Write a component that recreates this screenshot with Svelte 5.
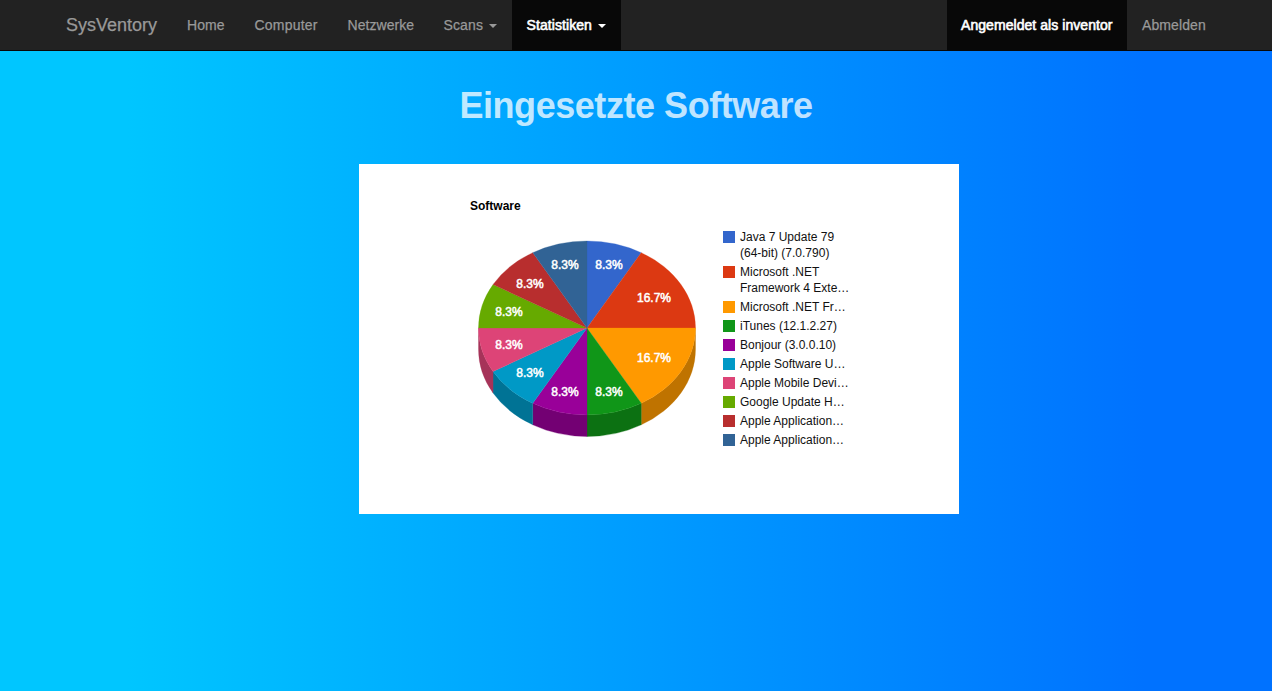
<script>
  const left = [
    { label: 'Home', w: 68, ls: 0.05, pad: 15 },
    { label: 'Computer', w: 93, ls: 0.2, pad: 14.5 },
    { label: 'Netzwerke', w: 96, ls: 0.05, pad: 14.5 },
    { label: 'Scans', w: 83, ls: 0.12, pad: 14.5, caret: true },
    { label: 'Statistiken', w: 109, ls: 0.08, pad: 14.5, caret: true, active: true }
  ];
  const right = [
    { label: 'Angemeldet als inventor', w: 180, ls: 0.06, pad: 14, active: true },
    { label: 'Abmelden', w: 94, ls: 0.1, pad: 15 }
  ];

  const slices = [
    { color: '#3366cc', side: '#264d99', share: 1, x: 250, y: 105, lines: ['Java 7 Update 79', '(64-bit) (7.0.790)'] },
    { color: '#dc3912', side: '#a52b0e', share: 2, x: 295, y: 138, lines: ['Microsoft .NET', 'Framework 4 Exte…'] },
    { color: '#ff9900', side: '#bf7300', share: 2, x: 295, y: 198, lines: ['Microsoft .NET Fr…'] },
    { color: '#109618', side: '#0c7112', share: 1, x: 250, y: 232, lines: ['iTunes (12.1.2.27)'] },
    { color: '#990099', side: '#730073', share: 1, x: 206, y: 232, lines: ['Bonjour (3.0.0.10)'] },
    { color: '#0099c6', side: '#007395', share: 1, x: 171, y: 213, lines: ['Apple Software U…'] },
    { color: '#dd4477', side: '#a63359', share: 1, x: 150, y: 185, lines: ['Apple Mobile Devi…'] },
    { color: '#66aa00', side: '#4d8000', share: 1, x: 150, y: 152, lines: ['Google Update H…'] },
    { color: '#b82e2e', side: '#8a2323', share: 1, x: 171, y: 124, lines: ['Apple Application…'] },
    { color: '#316395', side: '#254a70', share: 1, x: 206, y: 105, lines: ['Apple Application…'] }
  ];

  const cx = 228, cy = 164, rx = 108.5, ry = 87, depth = 21.5;
  const point = (k) => {
    const a = (k * Math.PI) / 6;
    return [cx + rx * Math.sin(a), cy - ry * Math.cos(a)];
  };
  let k = 0;
  const pie = slices.map((s) => {
    const from = k;
    k += s.share;
    const [x1, y1] = point(from);
    const [x2, y2] = point(k);
    return {
      ...s,
      percent: s.share === 2 ? '16.7%' : '8.3%',
      face: `M${cx} ${cy}L${x1} ${y1}A${rx} ${ry} 0 0 1 ${x2} ${y2}Z`,
      wall: from >= 3 && k <= 9
        ? `M${x1} ${y1}A${rx} ${ry} 0 0 1 ${x2} ${y2}v${depth}A${rx} ${ry} 0 0 0 ${x1} ${y1 + depth}Z`
        : null
    };
  });
</script>

{#snippet item(n)}
  <li style="width: {n.w}px">
    <a href="#top" class:active={n.active} style="letter-spacing: {n.ls}px; padding-left: {n.pad}px">{n.label}{#if n.caret}<b class="caret"></b>{/if}</a>
  </li>
{/snippet}

<nav>
  <div class="container">
    <a class="brand" href="#top">SysVentory</a>
    <ul>{#each left as n}{@render item(n)}{/each}</ul>
    <ul class="right">{#each right as n}{@render item(n)}{/each}</ul>
  </div>
</nav>

<main>
  <h1>Eingesetzte Software</h1>
  <section class="chart">
    <div class="plot">
      <h2>Software</h2>
      <svg width="364" height="350" viewBox="0 0 364 350">
        {#each pie as s}
          {#if s.wall}<path d={s.wall} fill={s.side} stroke={s.side} stroke-width="0.3" />{/if}
        {/each}
        {#each pie as s}<path d={s.face} fill={s.color} stroke={s.color} stroke-width="0.3" />{/each}
        {#each pie as s}<text x={s.x} y={s.y}>{s.percent}</text>{/each}
      </svg>
    </div>
    <ul class="legend">
      {#each slices as s}
        <li>
          <i style="background: {s.color}"></i>
          <span>{#each s.lines as line}<span class="line">{line}</span>{/each}</span>
        </li>
      {/each}
    </ul>
  </section>
</main>

<style>
  :global(body) {
    min-height: 691px;
    background: linear-gradient(to right, #00c6ff 10%, #0072ff 90%);
    font-family: "Liberation Sans", Arial, sans-serif;
  }
  ul { display: flex; margin: 0; padding: 0; list-style: none; }
  nav { height: 50px; background: #222; border-bottom: 1px solid #080808; }
  .container { display: flex; width: 1170px; margin: 0 auto; }
  nav a { display: block; color: #999; text-decoration: none; white-space: nowrap; -webkit-text-stroke: 0.25px currentColor; }
  .brand { box-sizing: border-box; width: 121px; padding: 0 15px; font-size: 18px; line-height: 50px; }
  nav li a { box-sizing: border-box; height: 50px; font-size: 14px; line-height: 50px; }
  nav li a.active { color: #fff; background: #080808; -webkit-text-stroke: 0.6px #fff; }
  .right { margin-left: auto; }
  .caret {
    display: inline-block;
    margin-left: 6px;
    vertical-align: middle;
    border-top: 4px solid currentColor;
    border-left: 4px solid transparent;
    border-right: 4px solid transparent;
  }
  main { display: flow-root; }
  h1 {
    margin: 35px 0 0;
    height: 40px;
    line-height: 40px;
    text-align: center;
    font-size: 36px;
    letter-spacing: -0.45px;
    color: rgba(255, 255, 255, 0.75);
  }
  .chart { display: flex; width: 600px; height: 350px; margin: 38px 0 0 359px; background: #fff; }
  .plot { display: grid; width: 364px; }
  .plot > * { grid-area: 1 / 1; }
  h2 { margin: 34px 0 0 111px; font-size: 12px; line-height: 16px; color: #000; }
  svg text { font-size: 12px; text-anchor: middle; fill: #fff; stroke: #fff; stroke-width: 0.5px; }
  .legend { flex-direction: column; gap: 3px; padding-top: 65px; font-size: 12px; line-height: 16px; color: #111; }
  .legend li { display: flex; gap: 5px; }
  .legend i { width: 12px; height: 12px; margin-top: 2px; }
  .line { display: block; white-space: nowrap; }
</style>
